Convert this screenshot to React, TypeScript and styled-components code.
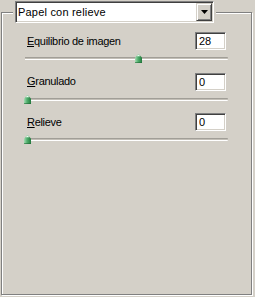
import React from 'react';
import styled, { createGlobalStyle } from 'styled-components';

const Global = createGlobalStyle`
  html, body { margin: 0; padding: 0; background: #d4d0c8; }
  body { font-family: "Liberation Sans", Arial, sans-serif; font-size: 11px; color: #000; }
`;

const Page = styled.div`
  width: 255px;
  height: 297px;
  box-sizing: border-box;
  padding: 1px 0 0 1px;
  overflow: hidden;
  background: #d4d0c8;
`;

const SelectHolder = styled.div`
  position: relative;
  z-index: 1;
  margin-left: 12px;
  width: fit-content;
  padding: 0 2px;
  background: #d4d0c8;
`;

const Combo = styled.div`
  box-sizing: border-box;
  width: 199px;
  height: 22px;
  padding: 1px;
  display: flex;
  align-items: stretch;
  background: #fff;
  border: 1px solid;
  border-color: #808080 #fff #fff #808080;
  box-shadow: inset 1px 1px #404040, inset -1px -1px #d4d0c8;
`;

const ComboText = styled.div`
  flex: 1;
  display: flex;
  align-items: center;
  padding-left: 1px;
  font-size: 11px;
  letter-spacing: 0.2px;
`;

const ComboButton = styled.div`
  box-sizing: border-box;
  width: 16px;
  display: flex;
  align-items: center;
  justify-content: center;
  background: #d4d0c8;
  border: 1px solid;
  border-color: #d4d0c8 #404040 #404040 #d4d0c8;
  box-shadow: inset 1px 1px #fff, inset -1px -1px #808080;
`;

const Frame = styled.div`
  box-sizing: border-box;
  margin-top: -11px;
  width: 251px;
  height: 283px;
  border: 1px solid #808080;
  box-shadow: inset 1px 1px #fff, 1px 1px #fff;
  padding: 19px 0 0 23px;
`;

const Section = styled.div`
  width: 203px;
  height: 40.5px;
`;

const Row = styled.div`
  height: 18px;
  display: flex;
  align-items: center;
  justify-content: space-between;
  padding: 0 2px;
`;

const Label = styled.span`
  font-size: 11px;
  line-height: 13px;
  letter-spacing: -0.3px;
  & u { text-decoration: underline; text-underline-offset: 1px; }
`;

const ValueBox = styled.input`
  box-sizing: border-box;
  width: 31px;
  height: 18px;
  padding: 0 0 0 3px;
  margin: 0;
  font: inherit;
  font-size: 11px;
  color: #000;
  background: #fff;
  border: 1px solid;
  border-color: #808080 #fff #fff #808080;
  box-shadow: inset 1px 1px #404040, inset -1px -1px #d4d0c8;
  outline: none;
`;

const TrackArea = styled.div`
  position: relative;
  margin-top: 4px;
  height: 10px;
`;

const Track = styled.div`
  position: relative;
  top: 3px;
  box-sizing: border-box;
  height: 3px;
  border-top: 1px solid #a19e97;
  border-bottom: 1px solid #fff;
  background: #c2beb6;
  border-radius: 0 1px 1px 0;
`;

const Thumb = styled.svg`
  position: absolute;
  top: 0;
  width: 7px;
  height: 9px;
`;

function Slider({ value, max, id }: { value: number; max: number; id: string }) {
  const left = -1 + Math.round((value / max) * 198);
  return (
    <TrackArea>
      <Track />
      <Thumb style={{ left }} viewBox="0 0 7 9">
        <defs>
          <linearGradient id={id} x1="0" y1="0" x2="1" y2="0">
            <stop offset="0" stopColor="#a6dcb4" />
            <stop offset="0.45" stopColor="#4fae6c" />
            <stop offset="1" stopColor="#237a3e" />
          </linearGradient>
        </defs>
        <polygon points="3.5,0 7,3.5 7,9 0,9 0,3.5" fill={`url(#${id})`} />
        <polygon points="3.5,0.3 5.3,2.2 1.7,2.2" fill="#f0faf2" />
        <rect x="0" y="8" width="7" height="1" fill="#1f6a35" opacity="0.6" />
      </Thumb>
    </TrackArea>
  );
}

function Param({ letter, rest, value, max, id }: { letter: string; rest: string; value: number; max: number; id: string }) {
  return (
    <Section>
      <Row>
        <Label>
          <u>{letter}</u>
          {rest}
        </Label>
        <ValueBox readOnly value={String(value)} />
      </Row>
      <Slider value={value} max={max} id={id} />
    </Section>
  );
}

export default function App() {
  return (
    <Page>
      <Global />
      <SelectHolder>
        <Combo>
          <ComboText>Papel con relieve</ComboText>
          <ComboButton>
            <svg width="7" height="4" viewBox="0 0 7 4">
              <polygon points="0,0 7,0 3.5,4" fill="#000" />
            </svg>
          </ComboButton>
        </Combo>
      </SelectHolder>
      <Frame>
        <Param letter="E" rest="quilibrio de imagen" value={28} max={50} id="t1" />
        <Param letter="G" rest="ranulado" value={0} max={20} id="t2" />
        <Param letter="R" rest="elieve" value={0} max={25} id="t3" />
      </Frame>
    </Page>
  );
}
